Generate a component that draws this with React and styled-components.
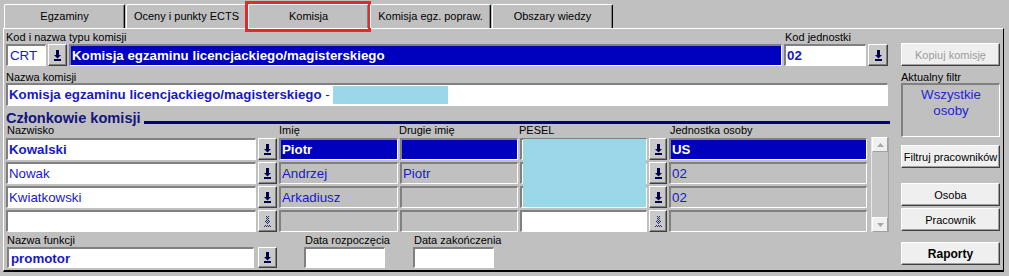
import styled, { createGlobalStyle } from 'styled-components'

const GlobalStyle = createGlobalStyle`
  html, body {
    margin: 0;
    padding: 0;
    background: #c0c0c0;
  }
  body {
    font-family: "Liberation Sans", Arial, sans-serif;
    font-size: 11px;
    color: #000;
  }
`

const Window = styled.div`
  width: 1009px;
  height: 276px;
  overflow: hidden;
  background: #c0c0c0;
  padding-top: 4px;
  box-sizing: border-box;
`

const TabStrip = styled.div`
  display: flex;
  gap: 1px;
  padding-left: 4px;
  height: 24px;
`

const Tab = styled.div`
  position: relative;
  width: 121px;
  height: 24px;
  box-sizing: border-box;
  border-top: 1px solid #fff;
  border-left: 1px solid #fff;
  border-right: 1px solid #000;
  border-radius: 2px 2px 0 0;
  box-shadow: inset -1px 0 0 #808080;
  display: flex;
  align-items: center;
  justify-content: center;
  padding-bottom: 1px;
  font-size: 11px;
`

const Highlight = styled.div`
  position: absolute;
  left: -4px;
  top: -4px;
  right: -3px;
  bottom: -4px;
  border: 3px solid #e22a2a;
  pointer-events: none;
`

const Panel = styled.div`
  margin-left: 3px;
  width: 1001px;
  height: 244px;
  box-sizing: border-box;
  border-top: 1px solid #fff;
  border-left: 1px solid #fff;
  border-right: 1px solid #000;
  border-bottom: 2px solid #000;
  padding: 2px 0 0 2px;
  display: grid;
  grid-template-columns: 884px 99px;
  column-gap: 11px;
`

const MainColumn = styled.div`
  display: flex;
  flex-direction: column;
`

const SideColumn = styled.div`
  display: flex;
  flex-direction: column;
`

const LabelRow = styled.div`
  display: flex;
  height: ${p => p.$h || 13}px;
  margin-top: ${p => p.$mt || 0}px;
  line-height: 13px;
  white-space: nowrap;
`

const Label = styled.div`
  width: ${p => (p.$w ? `${p.$w}px` : 'auto')};
  padding-left: ${p => p.$pl || 0}px;
  box-sizing: border-box;
`

const FieldRow = styled.div`
  display: flex;
  gap: ${p => p.$gap ?? 2}px;
  height: ${p => p.$h || 22}px;
  margin-top: ${p => p.$mt || 0}px;
`

const Field = styled.div`
  box-sizing: border-box;
  width: ${p => p.$w}px;
  height: 100%;
  margin-left: ${p => p.$ml || 0}px;
  border-top: 2px solid #808080;
  border-left: 2px solid #808080;
  border-bottom: 1px solid #fff;
  border-right: 1px solid #fff;
  background: ${p => (p.$sel ? '#0000bf' : p.$grey ? '#c0c0c0' : '#fff')};
  color: ${p => (p.$sel ? '#fff' : '#1818c8')};
  font-weight: ${p => (p.$bold ? 700 : 400)};
  font-size: 13.3px;
  line-height: 19px;
  padding-left: ${p => p.$pl ?? 1}px;
  white-space: nowrap;
  overflow: hidden;
`

const Plain = styled.span`
  font-weight: 400;
`

const Masked = styled.span`
  display: inline-block;
  vertical-align: top;
  width: 115px;
  height: 18px;
  margin-top: 1px;
  background: #9ad7e8;
`

const DropButton = styled.div`
  box-sizing: border-box;
  width: ${p => p.$w || 19}px;
  height: 100%;
  margin-left: ${p => p.$ml || 0}px;
  background: #c9c9c9;
  border: 1px solid;
  border-color: #fff #404040 #404040 #fff;
  box-shadow: inset -1px -1px 0 #808080;
  display: flex;
  align-items: center;
  justify-content: center;
`

const Heading = styled.div`
  display: flex;
  align-items: flex-start;
  height: 14px;
  margin-top: 4px;
`

const HeadingText = styled.div`
  font-size: 14.6px;
  font-weight: 700;
  color: #14147f;
  line-height: 16px;
  white-space: nowrap;
`

const HeadingRule = styled.div`
  flex: 1;
  height: 3px;
  margin-top: 11px;
  margin-left: 3px;
  background: #000080;
`

const GridArea = styled.div`
  display: flex;
  height: 95px;
`

const Rows = styled.div`
  position: relative;
  width: 861px;
  display: flex;
  flex-direction: column;
  gap: 2px;
  padding-top: 1px;
`

const Redaction = styled.div`
  position: absolute;
  left: 517px;
  top: 2px;
  width: 123px;
  height: 68px;
  background: #9ad7e8;
`

const ScrollBar = styled.div`
  width: 18px;
  margin-left: 4px;
  display: flex;
  flex-direction: column;
  box-sizing: border-box;
  background: #c4c4c4;
  border-left: 1px solid #e8e8e8;
  border-right: 1px solid #a8a8a8;
`

const ScrollArrow = styled.div`
  height: 15px;
  box-sizing: border-box;
  background: #f0f0f0;
  border: 1px solid;
  border-color: #fff #a0a0a0 #a0a0a0 #fff;
  display: flex;
  align-items: center;
  justify-content: center;
  margin-top: ${p => (p.$bottom ? 'auto' : '0')};
`

const FilterBox = styled.div`
  box-sizing: border-box;
  height: 54px;
  border-top: 2px solid #808080;
  border-left: 2px solid #808080;
  border-bottom: 1px solid #fff;
  border-right: 1px solid #fff;
  text-align: center;
  color: #2424d0;
  font-size: 13.3px;
  line-height: 16px;
  padding-top: 2px;
`

const CmdButton = styled.button`
  box-sizing: border-box;
  width: 99px;
  height: 23px;
  margin-top: ${p => p.$mt || 0}px;
  padding: 0;
  background: #efefef;
  border: 1px solid;
  border-color: #fff #404040 #404040 #fff;
  box-shadow: inset -1px -1px 0 #a0a0a0;
  font-family: inherit;
  font-size: ${p => (p.$bold ? 12 : 11)}px;
  font-weight: ${p => (p.$bold ? 700 : 400)};
  color: ${p => (p.disabled ? '#9c9c9c' : '#000')};
`

const ArrowDown = ({ disabled }) => (
  <svg width="7" height="11" viewBox="0 0 7 11">
    {disabled && (
      <defs>
        <pattern id="dots" width="2" height="2" patternUnits="userSpaceOnUse">
          <rect width="1" height="1" fill="#2a2a70" />
          <rect x="1" y="1" width="1" height="1" fill="#2a2a70" />
        </pattern>
      </defs>
    )}
    <g fill={disabled ? 'url(#dots)' : '#00004a'}>
      <rect x="2" y="0" width="3" height="5" />
      <polygon points="0,5 7,5 3.5,8.5" />
      <rect x="0" y="9" width="7" height="2" />
    </g>
  </svg>
)

const SmallTriangle = ({ up }) => (
  <svg width="7" height="4" viewBox="0 0 7 4">
    <polygon points={up ? '0,4 7,4 3.5,0' : '0,0 7,0 3.5,4'} fill="#a8a8a8" />
  </svg>
)

const cols = { surname: 250, btn: 19, name: 119, second: 118, pesel: 127, btn2: 18, unit: 198 }

const members = [
  { surname: 'Kowalski', name: 'Piotr', second: '', pesel: '8', unit: 'US', selected: true },
  { surname: 'Nowak', name: 'Andrzej', second: 'Piotr', pesel: '7', unit: '02' },
  { surname: 'Kwiatkowski', name: 'Arkadiusz', second: '', pesel: '6', unit: '02' },
  { surname: '', name: '', second: '', pesel: '', unit: '', empty: true },
]

const MemberRow = ({ m }) => (
  <FieldRow>
    <Field $w={cols.surname} $bold={m.selected}>{m.surname}</Field>
    <DropButton $w={cols.btn}><ArrowDown disabled={m.empty} /></DropButton>
    <Field $w={cols.name} $sel={m.selected} $grey={!m.selected} $bold={m.selected}>{m.name}</Field>
    <Field $w={cols.second} $sel={m.selected} $grey={!m.selected}>{m.second}</Field>
    <Field $w={cols.pesel}>{m.pesel}</Field>
    <DropButton $w={cols.btn2}><ArrowDown disabled={m.empty} /></DropButton>
    <Field $w={cols.unit} $sel={m.selected} $grey={!m.selected} $bold={m.selected}>{m.unit}</Field>
  </FieldRow>
)

const tabs = ['Egzaminy', 'Oceny i punkty ECTS', 'Komisja', 'Komisja egz. popraw.', 'Obszary wiedzy']

export default function App() {
  return (
    <Window>
      <GlobalStyle />
      <TabStrip>
        {tabs.map(t => (
          <Tab key={t}>
            {t}
            {t === 'Komisja' && <Highlight />}
          </Tab>
        ))}
      </TabStrip>
      <Panel>
        <MainColumn>
          <LabelRow>
            <Label $w={779}>Kod i nazwa typu komisji</Label>
            <Label>Kod jednostki</Label>
          </LabelRow>
          <FieldRow>
            <Field $w={40} $pl={2}>CRT</Field>
            <DropButton $w={19}><ArrowDown /></DropButton>
            <Field $w={713} $sel $bold>Komisja egzaminu licencjackiego/magisterskiego</Field>
            <Field $w={82} $bold>02</Field>
            <DropButton $w={20}><ArrowDown /></DropButton>
          </FieldRow>
          <LabelRow $mt={5} $h={12}>
            <Label>Nazwa komisji</Label>
          </LabelRow>
          <FieldRow $h={23}>
            <Field $w={882} $bold $pl={1}>
              Komisja egzaminu licencjackiego/magisterskiego<Plain> - </Plain>
              <Masked />
            </Field>
          </FieldRow>
          <Heading>
            <HeadingText>Członkowie komisji</HeadingText>
            <HeadingRule />
          </Heading>
          <LabelRow>
            <Label $w={273} $pl={1}>Nazwisko</Label>
            <Label $w={120}>Imię</Label>
            <Label $w={120}>Drugie imię</Label>
            <Label $w={151}>PESEL</Label>
            <Label>Jednostka osoby</Label>
          </LabelRow>
          <GridArea>
            <Rows>
              {members.map((m, i) => <MemberRow key={i} m={m} />)}
              <Redaction />
            </Rows>
            <ScrollBar>
              <ScrollArrow><SmallTriangle up /></ScrollArrow>
              <ScrollArrow $bottom><SmallTriangle /></ScrollArrow>
            </ScrollBar>
          </GridArea>
          <LabelRow $mt={2}>
            <Label $w={299} $pl={1}>Nazwa funkcji</Label>
            <Label $w={109}>Data rozpoczęcia</Label>
            <Label>Data zakończenia</Label>
          </LabelRow>
          <FieldRow $h={21} $gap={0}>
            <Field $w={247} $ml={1} $bold $pl={2}>promotor</Field>
            <DropButton $w={19} $ml={4}><ArrowDown /></DropButton>
            <Field $w={81} $ml={27} />
            <Field $w={81} $ml={28} />
          </FieldRow>
        </MainColumn>
        <SideColumn>
          <CmdButton $mt={12} disabled>Kopiuj komisję</CmdButton>
          <LabelRow $mt={5} $h={12}>
            <Label>Aktualny filtr</Label>
          </LabelRow>
          <FilterBox>Wszystkie<br />osoby</FilterBox>
          <CmdButton $mt={8}>Filtruj pracowników</CmdButton>
          <CmdButton $mt={15}>Osoba</CmdButton>
          <CmdButton $mt={2}>Pracownik</CmdButton>
          <CmdButton $mt={11} $bold>Raporty</CmdButton>
        </SideColumn>
      </Panel>
    </Window>
  )
}
